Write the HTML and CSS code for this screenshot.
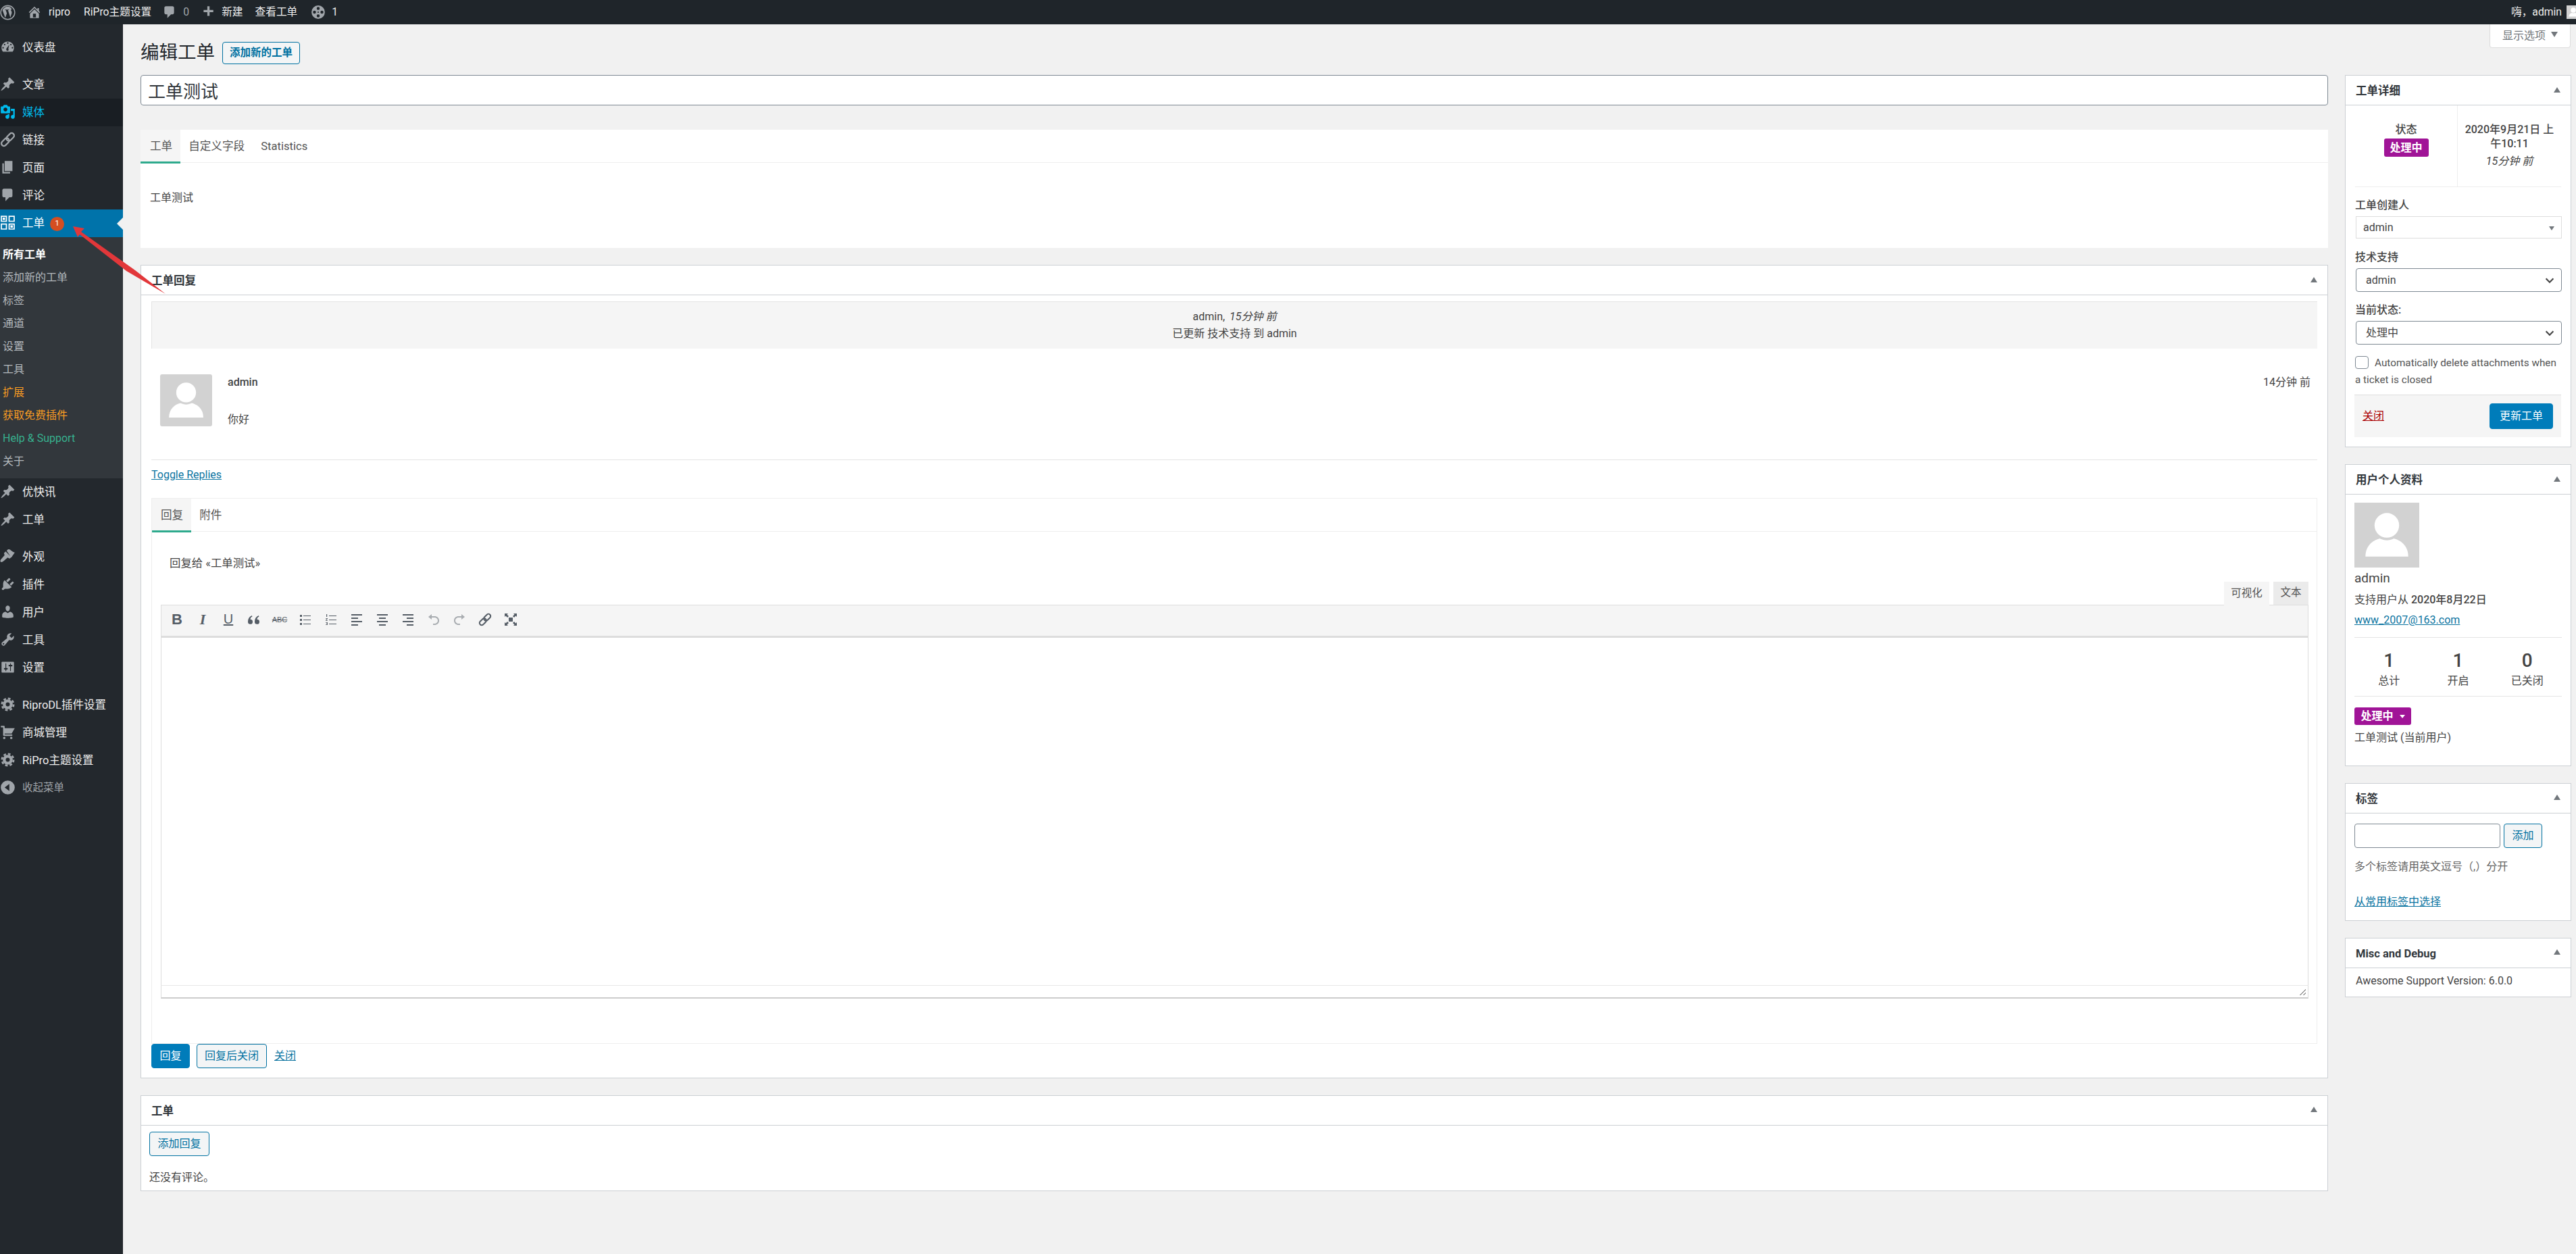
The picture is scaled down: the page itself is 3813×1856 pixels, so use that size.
FILE: index.html
```html
<!DOCTYPE html>
<html lang="zh-CN">
<head>
    <meta charset="UTF-8">
    <title>编辑工单</title>
    <link rel="stylesheet" href="styles.css">
</head>
<body>
    <!-- icon set -->
    <svg class="icon-defs" xmlns="http://www.w3.org/2000/svg">
        <symbol id="i-wp" viewBox="0 0 20 20"><circle cx="10" cy="10" r="9" fill="none" stroke="currentColor" stroke-width="1.300"/><path d="M3.200 7l3.600 10 2-6-1.300-4h-1V6.200h5V7h-1.200l3 9.500 1.700-5.500c.5-1.800-.3-2.700-.8-3.600-.4-.8.100-1.700 1-1.600C13.800 3.200 12 2.400 10 2.400 7 2.400 4.500 4.200 3.200 7z"/></symbol>
        <symbol id="i-home" viewBox="0 0 20 20"><path d="M16 8.500l1.530 1.530-1.060 1.060L10 4.620l-6.470 6.470-1.060-1.060L10 2.500l4 4v-2h2v4zm-6-2.460l6 5.990V18H4v-5.970zM12 17v-5H8v5h4z"/></symbol>
        <symbol id="i-comment" viewBox="0 0 20 20"><path d="M5 2h9c1.100 0 2 .9 2 2v7c0 1.100-.9 2-2 2h-2l-5 5v-5H5c-1.100 0-2-.9-2-2V4c0-1.100.9-2 2-2z"/></symbol>
        <symbol id="i-plus" viewBox="0 0 20 20"><path d="M17 7v3h-5v5H9v-5H4V7h5V2h3v5h5z"/></symbol>
        <symbol id="i-reel" viewBox="0 0 20 20"><path fill-rule="evenodd" d="M10 1a9 9 0 1 0 0 18 9 9 0 0 0 0-18zM10 3a2 2 0 1 1 0 4 2 2 0 0 1 0-4zM5 8a2 2 0 1 1 0 4 2 2 0 0 1 0-4zm10 0a2 2 0 1 1 0 4 2 2 0 0 1 0-4zm-5 5a2 2 0 1 1 0 4 2 2 0 0 1 0-4zm0-4a1 1 0 1 1 0 2 1 1 0 0 1 0-2z"/></symbol>
        <symbol id="i-dashboard" viewBox="0 0 20 20"><path fill-rule="evenodd" d="M3.760 16h12.480c1.100-1.370 1.760-3.110 1.760-5 0-4.420-3.580-8-8-8s-8 3.580-8 8c0 1.890.66 3.630 1.760 5zM10 4c.55 0 1 .45 1 1s-.45 1-1 1-1-.45-1-1 .45-1 1-1zM6 6c.55 0 1 .45 1 1s-.45 1-1 1-1-.45-1-1 .45-1 1-1zm8 0c.55 0 1 .45 1 1s-.45 1-1 1-1-.45-1-1 .45-1 1-1zm-5.370 5.550L12 7l-1.300 5.200c.8 1 .3 2.800-.7 2.800-1.100 0-2-.9-2-2 0-.57.24-1.080.63-1.450zM4 10c.55 0 1 .45 1 1s-.45 1-1 1-1-.45-1-1 .45-1 1-1zm12 0c.55 0 1 .45 1 1s-.45 1-1 1-1-.45-1-1 .45-1 1-1z"/></symbol>
        <symbol id="i-pin" viewBox="0 0 20 20"><path d="M10.440 3.020l1.820-1.820 6.360 6.350-1.830 1.820c-1.050-.68-2.480-.57-3.410.36l-.75.75c-.92.93-1.040 2.350-.35 3.410l-1.830 1.820-2.410-2.410-2.800 2.790c-.42.42-3.380 2.710-3.800 2.290s1.860-3.390 2.280-3.810l2.790-2.790L4.100 9.360l1.830-1.820c1.050.69 2.480.57 3.400-.36l.75-.75c.93-.92 1.050-2.350.36-3.410z"/></symbol>
        <symbol id="i-media" viewBox="0 0 20 20"><path fill-rule="evenodd" d="M13 11V4c0-.55-.45-1-1-1h-1.670L9 1H5L3.670 3H2c-.55 0-1 .45-1 1v7c0 .55.45 1 1 1h10c.55 0 1-.45 1-1zM7 4.500c1.380 0 2.500 1.120 2.500 2.500S8.380 9.500 7 9.500 4.500 8.380 4.500 7 5.620 4.500 7 4.500zM14 6h5v10.500c0 1.380-1.120 2.500-2.500 2.500S14 17.880 14 16.500s1.120-2.500 2.500-2.500c.17 0 .34.02.5.05V9h-3V6zm-4 8.050V13h2v3.500c0 1.380-1.120 2.500-2.500 2.500S7 17.880 7 16.500 8.120 14 9.500 14c.17 0 .34.02.5.05z"/></symbol>
        <symbol id="i-link" viewBox="0 0 20 20"><g fill="none" stroke="currentColor" stroke-width="2"><rect x="10" y="1" width="6.400" height="11.500" rx="3.200" transform="rotate(45 13.200 6.750)"/><rect x="3.600" y="7.500" width="6.400" height="11.500" rx="3.200" transform="rotate(45 6.800 13.250)"/></g></symbol>
        <symbol id="i-page" viewBox="0 0 20 20"><path d="M6 15V2h10v13H6zm-1 1h8v2H3V5h2v11z"/></symbol>
        <symbol id="i-ticket" viewBox="0 0 20 20"><path fill-rule="evenodd" d="M1 1h8v8H1zM2.500 2.500v5h5v-5zM11 1h8v8h-8zM12.500 2.500v5h5v-5zM1 11h8v8H1zM2.500 12.500v5h5v-5zM11 11h8v8h-8zM12.500 12.500v5h5v-5z"/><path d="M3.500 3.500h3v3h-3zM13.500 13.500h3v3h-3z"/></symbol>
        <symbol id="i-brush" viewBox="0 0 20 20"><path d="M8.500 2.500l1.500-1.300c1-.6 2.500-.3 3.500.5 1.500 1.300 2.500 2.200 5.500 3.300l-4.500 6.500zM7.300 3.700l7.300 7.300-2.300 1.800-2.500-1.200-5.800 5c-1 .8-2.600 1-3.200.3s-.4-2 .4-3l4.700-5.400-.8-2.800z"/></symbol>
        <symbol id="i-plugin" viewBox="0 0 20 20"><path d="M13.110 4.360L9.870 7.600 8 5.730l3.240-3.240c.35-.34 1.050-.2 1.560.32.52.51.66 1.210.31 1.550zm-8 1.770l.91-1.120 9.010 9.010-1.190.84c-.71.71-2.630 1.160-3.820 1.160H6.140L4.900 17.260c-.59.59-1.540.59-2.120 0-.59-.58-.59-1.530 0-2.120l1.240-1.240v-3.880c0-1.130.38-3.190 1.090-3.890zm7.260 3.970l3.240-3.240c.34-.35 1.040-.21 1.550.31.52.51.66 1.210.31 1.550l-3.240 3.250z"/></symbol>
        <symbol id="i-users" viewBox="0 0 20 20"><path d="M10 9.250c-2.270 0-2.730-3.440-2.730-3.440C7 4.020 7.820 2 9.970 2c2.160 0 2.980 2.020 2.710 3.810 0 0-.41 3.440-2.680 3.440zm0 2.570L12.720 10c2.390 0 4.520 2.330 4.520 4.530v2.490s-3.650 1.130-7.240 1.130c-3.650 0-7.240-1.130-7.240-1.130v-2.490c0-2.250 1.940-4.480 4.470-4.480z"/></symbol>
        <symbol id="i-tools" viewBox="0 0 20 20"><path fill-rule="evenodd" d="M16.680 9.770c-1.340 1.340-3.300 1.670-4.950.99l-5.410 6.520c-.99.99-2.590.99-3.580 0s-.99-2.590 0-3.570l6.520-5.420c-.68-1.650-.35-3.610.99-4.950 1.280-1.280 3.120-1.620 4.710-1.060l-2.890 2.890 2.820 2.820 2.860-2.870c.53 1.580.18 3.390-1.070 4.650zM3.810 16.210c.4.39 1.030.39 1.420 0 .4-.4.4-1.030 0-1.430-.39-.39-1.020-.39-1.420 0-.39.4-.39 1.030 0 1.430z"/></symbol>
        <symbol id="i-settings" viewBox="0 0 20 20"><path fill-rule="evenodd" d="M18 16V4c0-.55-.45-1-1-1H3c-.55 0-1 .45-1 1v12c0 .55.45 1 1 1h14c.55 0 1-.45 1-1zM8 11h1c.55 0 1 .45 1 1s-.45 1-1 1H8v1.500c0 .28-.22.5-.5.5s-.5-.22-.5-.5V13H6c-.55 0-1-.45-1-1s.45-1 1-1h1V5.500c0-.28.22-.5.5-.5s.5.22.5.5V11zm5-2h-1c-.55 0-1-.45-1-1s.45-1 1-1h1V5.500c0-.28.22-.5.5-.5s.5.22.5.5V7h1c.55 0 1 .45 1 1s-.45 1-1 1h-1v5.500c0 .28-.22.5-.5.5s-.5-.22-.5-.5V9z"/></symbol>
        <symbol id="i-gear" viewBox="0 0 20 20"><circle cx="10" cy="10" r="4.500" fill="none" stroke="currentColor" stroke-width="3.800"/><circle cx="10" cy="10" r="7.500" fill="none" stroke="currentColor" stroke-width="2.400" stroke-dasharray="3.300 2.590"/></symbol>
        <symbol id="i-cart" viewBox="0 0 20 20"><path d="M6 13h9c.55 0 1 .45 1 1s-.45 1-1 1H5c-.55 0-1-.45-1-1V4H2c-.55 0-1-.45-1-1s.45-1 1-1h3c.55 0 1 .45 1 1v2h13l-4 7H6v1zm-.5 3c.83 0 1.500.67 1.500 1.500S6.330 19 5.500 19 4 18.330 4 17.500 4.670 16 5.500 16zm9 0c.83 0 1.500.67 1.500 1.500s-.67 1.500-1.500 1.500-1.500-.67-1.500-1.500.67-1.500 1.500-1.500z"/></symbol>
        <symbol id="i-collapse" viewBox="0 0 20 20"><path fill-rule="evenodd" d="M10 1a9 9 0 1 0 0 18 9 9 0 0 0 0-18zm2 4.500v9L6 10z"/></symbol>
        <symbol id="i-avatar" viewBox="0 0 100 100"><path fill="#d2d2d2" d="M0 0h100v100H0z"/><path fill="#fff" d="M17 83c0-18 14-29 33-29s33 11 33 29z"/><circle cx="50" cy="35" r="23" fill="#d2d2d2"/><circle cx="50" cy="35" r="19" fill="#fff"/></symbol>
        <symbol id="i-quote" viewBox="0 0 20 20"><path d="M1 13a3.500 3.500 0 1 0 3.500-3.200c0-2 1-3.300 3-4.300L6.800 4C3 5.500 1 8.500 1 13zm10 0a3.500 3.500 0 1 0 3.500-3.200c0-2 1-3.300 3-4.300L16.800 4C13 5.500 11 8.500 11 13z"/></symbol>
        <symbol id="i-ul" viewBox="0 0 20 20"><path d="M2 3h3v3H2zM2 9h3v3H2zM2 15h3v3H2zM7 4h11v1H7zM7 10h11v1H7zM7 16h11v1H7z"/></symbol>
        <symbol id="i-ol" viewBox="0 0 20 20"><path d="M7 4h11v1H7zM7 10h11v1H7zM7 16h11v1H7zM3 2h1.200v4H3zM2 8h3v.8L3.200 11H5v.8H2V11l1.800-2.200H2zM2 14h3v4H2v-.8h2.200v-.8H3v-.8h1.200v-.8H2z"/></symbol>
        <symbol id="i-left" viewBox="0 0 20 20"><path d="M2 2h16v2H2zM2 7h10v2H2zM2 12h16v2H2zM2 17h10v2H2z"/></symbol>
        <symbol id="i-center" viewBox="0 0 20 20"><path d="M2 2h16v2H2zM5 7h10v2H5zM2 12h16v2H2zM5 17h10v2H5z"/></symbol>
        <symbol id="i-right" viewBox="0 0 20 20"><path d="M2 2h16v2H2zM8 7h10v2H8zM2 12h16v2H2zM8 17h10v2H8z"/></symbol>
        <symbol id="i-undo" viewBox="0 0 20 20"><path d="M2 6l5-4v3h4c4 0 7 2.500 7 6.500S15 18 11 18H9v-2h2c2.800 0 5-1.800 5-4.500S13.800 7 11 7H7v3z"/></symbol>
        <symbol id="i-redo" viewBox="0 0 20 20"><path d="M18 6l-5-4v3H9C5 5 2 7.500 2 11.500S5 18 9 18h2v-2H9c-2.800 0-5-1.800-5-4.500S6.200 7 9 7h4v3z"/></symbol>
        <symbol id="i-full" viewBox="0 0 20 20"><path d="M7 7h6v6H7zM1 1h5L4.500 2.600 7 5 5 7 2.600 4.500 1 6zM19 1v5l-1.600-1.500L15 7l-2-2 2.500-2.400L14 1zM1 19v-5l1.600 1.500L5 13l2 2-2.500 2.400L6 19zM19 19h-5l1.500-1.600L13 15l2-2 2.400 2.500L19 14z"/></symbol>
        <symbol id="i-chevron" viewBox="0 0 20 20"><path d="M4 7l6 6 6-6" fill="none" stroke="currentColor" stroke-width="2.400"/></symbol>
    </svg>

    <!-- top bar -->
    <header class="adminbar">
        <div class="bar-left">
            <svg class="bar-icon bar-wp"><use href="#i-wp"/></svg>
            <svg class="bar-icon bar-home"><use href="#i-home"/></svg>
            <a class="bar-item bar-site">ripro</a>
            <a class="bar-item bar-theme">RiPro主题设置</a>
            <svg class="bar-icon bar-comment"><use href="#i-comment"/></svg>
            <span class="bar-item bar-muted">0</span>
            <svg class="bar-icon bar-plus"><use href="#i-plus"/></svg>
            <a class="bar-item bar-new">新建</a>
            <a class="bar-item bar-view">查看工单</a>
            <svg class="bar-icon bar-reel"><use href="#i-reel"/></svg>
            <span class="bar-item bar-count">1</span>
        </div>
        <div class="bar-right">
            <span>嗨，admin</span>
            <svg class="bar-avatar"><use href="#i-avatar"/></svg>
        </div>
    </header>

    <div class="layout">
        <nav class="sidemenu">
            <a class="menu-item menu-first"><svg><use href="#i-dashboard"/></svg>仪表盘</a>
            <a class="menu-item menu-sep"><svg><use href="#i-pin"/></svg>文章</a>
            <a class="menu-item menu-hover"><svg><use href="#i-media"/></svg>媒体</a>
            <a class="menu-item"><svg><use href="#i-link"/></svg>链接</a>
            <a class="menu-item"><svg><use href="#i-page"/></svg>页面</a>
            <a class="menu-item"><svg><use href="#i-comment"/></svg>评论</a>
            <a class="menu-item menu-current"><svg><use href="#i-ticket"/></svg>工单<span class="menu-badge">1</span></a>
            <div class="submenu">
                <a class="sub-current">所有工单</a>
                <a>添加新的工单</a>
                <a>标签</a>
                <a>通道</a>
                <a>设置</a>
                <a>工具</a>
                <a class="sub-orange">扩展</a>
                <a class="sub-orange">获取免费插件</a>
                <a class="sub-green">Help &amp; Support</a>
                <a>关于</a>
            </div>
            <a class="menu-item"><svg><use href="#i-pin"/></svg>优快讯</a>
            <a class="menu-item"><svg><use href="#i-pin"/></svg>工单</a>
            <a class="menu-item menu-sep"><svg><use href="#i-brush"/></svg>外观</a>
            <a class="menu-item"><svg><use href="#i-plugin"/></svg>插件</a>
            <a class="menu-item"><svg><use href="#i-users"/></svg>用户</a>
            <a class="menu-item"><svg><use href="#i-tools"/></svg>工具</a>
            <a class="menu-item"><svg><use href="#i-settings"/></svg>设置</a>
            <a class="menu-item menu-sep"><svg><use href="#i-gear"/></svg>RiproDL插件设置</a>
            <a class="menu-item"><svg><use href="#i-cart"/></svg>商城管理</a>
            <a class="menu-item"><svg><use href="#i-gear"/></svg>RiPro主题设置</a>
            <a class="menu-item menu-collapse"><svg><use href="#i-collapse"/></svg>收起菜单</a>
        </nav>

        <main class="content">
            <a class="screen-options">显示选项<span class="caret-down"></span></a>

            <div class="page-head">
                <h1>编辑工单</h1>
                <a class="btn btn-head">添加新的工单</a>
            </div>

            <div class="columns">
                <div class="col-main">
                    <input class="title-input" type="text" value="工单测试">

                    <section class="box box-ticket">
                        <div class="tabs">
                            <a class="tab tab-active">工单</a>
                            <a class="tab">自定义字段</a>
                            <a class="tab">Statistics</a>
                        </div>
                        <p class="ticket-text">工单测试</p>
                    </section>

                    <section class="box">
                        <div class="box-head">
                            <h2>工单回复</h2>
                            <span class="caret-up"></span>
                        </div>
                        <div class="replies">
                            <div class="event">
                                <p>admin, <em>15分钟 前</em></p>
                                <p>已更新 技术支持 到 admin</p>
                            </div>
                            <div class="reply-row">
                                <svg class="reply-avatar"><use href="#i-avatar"/></svg>
                                <div class="reply-body">
                                    <div class="reply-meta">
                                        <strong>admin</strong>
                                        <span>14分钟 前</span>
                                    </div>
                                    <p>你好</p>
                                </div>
                            </div>
                            <a class="toggle-link">Toggle Replies</a>

                            <div class="reply-panel">
                                <div class="tabs tabs-reply">
                                    <a class="tab tab-active">回复</a>
                                    <a class="tab">附件</a>
                                </div>
                                <p class="reply-to">回复给 «工单测试»</p>
                                <div class="editor">
                                    <div class="editor-tabs">
                                        <a class="editor-tab editor-tab-on">可视化</a>
                                        <a class="editor-tab">文本</a>
                                    </div>
                                    <div class="toolbar">
                                        <span class="tool tool-b">B</span>
                                        <span class="tool tool-i">I</span>
                                        <span class="tool tool-u">U</span>
                                        <span class="tool"><svg><use href="#i-quote"/></svg></span>
                                        <span class="tool tool-abc">ABC</span>
                                        <span class="tool"><svg><use href="#i-ul"/></svg></span>
                                        <span class="tool"><svg><use href="#i-ol"/></svg></span>
                                        <span class="tool"><svg><use href="#i-left"/></svg></span>
                                        <span class="tool"><svg><use href="#i-center"/></svg></span>
                                        <span class="tool"><svg><use href="#i-right"/></svg></span>
                                        <span class="tool tool-off"><svg><use href="#i-undo"/></svg></span>
                                        <span class="tool tool-off"><svg><use href="#i-redo"/></svg></span>
                                        <span class="tool"><svg><use href="#i-link"/></svg></span>
                                        <span class="tool"><svg><use href="#i-full"/></svg></span>
                                    </div>
                                    <div class="editor-area"></div>
                                    <div class="editor-status"><span class="resize-grip"></span></div>
                                </div>
                            </div>

                            <div class="reply-actions">
                                <a class="btn btn-primary btn-reply">回复</a>
                                <a class="btn btn-close-reply">回复后关闭</a>
                                <a class="link">关闭</a>
                            </div>
                        </div>
                    </section>

                    <section class="box">
                        <div class="box-head">
                            <h2>工单</h2>
                            <span class="caret-up"></span>
                        </div>
                        <div class="notes">
                            <a class="btn btn-note">添加回复</a>
                            <p>还没有评论。</p>
                        </div>
                    </section>
                </div>

                <aside class="col-side">
                    <section class="box">
                        <div class="box-head">
                            <h2>工单详细</h2>
                            <span class="caret-up"></span>
                        </div>
                        <div class="detail-top">
                            <div class="detail-status">
                                <b>状态</b>
                                <span class="badge">处理中</span>
                            </div>
                            <div class="detail-date">
                                <b>2020年9月21日 上午10:11</b>
                                <em>15分钟 前</em>
                            </div>
                        </div>
                        <div class="detail-form">
                            <label>工单创建人</label>
                            <div class="select select-light">admin<span class="caret-down caret-small"></span></div>
                            <label>技术支持</label>
                            <div class="select">admin<svg><use href="#i-chevron"/></svg></div>
                            <label>当前状态:</label>
                            <div class="select">处理中<svg><use href="#i-chevron"/></svg></div>
                            <p class="auto-delete"><span class="checkbox"></span>Automatically delete attachments when a ticket is closed</p>
                        </div>
                        <div class="detail-actions">
                            <a class="link-danger">关闭</a>
                            <a class="btn btn-primary btn-update">更新工单</a>
                        </div>
                    </section>

                    <section class="box">
                        <div class="box-head">
                            <h2>用户个人资料</h2>
                            <span class="caret-up"></span>
                        </div>
                        <div class="profile">
                            <svg class="profile-avatar"><use href="#i-avatar"/></svg>
                            <div class="profile-name">admin</div>
                            <p class="profile-since">支持用户从 <b>2020年8月22日</b></p>
                            <a class="link profile-mail">www_2007@163.com</a>
                            <div class="stats">
                                <div><strong>1</strong><span>总计</span></div>
                                <div><strong>1</strong><span>开启</span></div>
                                <div><strong>0</strong><span>已关闭</span></div>
                            </div>
                            <span class="badge badge-menu">处理中<span class="caret-white"></span></span>
                            <p class="profile-ticket">工单测试 (当前用户)</p>
                        </div>
                    </section>

                    <section class="box">
                        <div class="box-head">
                            <h2>标签</h2>
                            <span class="caret-up"></span>
                        </div>
                        <div class="tagbox">
                            <div class="tag-row">
                                <input class="tag-input" type="text">
                                <a class="btn btn-tag">添加</a>
                            </div>
                            <p class="tag-help">多个标签请用英文逗号（,）分开</p>
                            <a class="link">从常用标签中选择</a>
                        </div>
                    </section>

                    <section class="box">
                        <div class="box-head">
                            <h2>Misc and Debug</h2>
                            <span class="caret-up"></span>
                        </div>
                        <p class="debug">Awesome Support Version: 6.0.0</p>
                    </section>
                </aside>
            </div>
        </main>
    </div>

    <!-- annotation arrow -->
    <svg class="arrow" viewBox="100 330 150 110">
        <polygon points="108,335 125,338 120,343 200,400 245,435 187,401 118,347 115,351" fill="#e2373a"/>
    </svg>
</body>
</html>
```

FILE: styles.css
```css
* {
    box-sizing: border-box;
}
html, body {
    margin: 0;
    height: 100%;
}
body {
    position: relative;
    font-family: Roboto, "Noto Sans CJK SC", sans-serif;
    font-size: 16px;
    line-height: 1.4;
    color: #444;
    background-color: #f1f1f1;
    overflow: hidden;
}
p, h1, h2 {
    margin: 0;
}
.icon-defs {
    display: none;
}

/* top bar */
.adminbar {
    display: flex;
    justify-content: space-between;
    align-items: center;
    height: 36px;
    background-color: #1f252a;
    color: #eee;
    font-size: 15.7px;
}
.bar-left, .bar-right {
    display: flex;
    align-items: center;
}
.bar-icon {
    width: 22px;
    height: 22px;
    fill: #a0a5aa;
    color: #a0a5aa;
    flex: none;
}
.bar-wp { width: 23px; height: 23px; }
.bar-home { margin-left: 17px; }
.bar-site { margin-left: 10px; }
.bar-theme { margin-left: 20px; }
.bar-comment { margin-left: 16px; }
.bar-muted { margin-left: 9px; color: #a0a5aa; }
.bar-plus { margin-left: 17px; }
.bar-new { margin-left: 9px; }
.bar-view { margin-left: 18px; }
.bar-reel { margin-left: 20px; }
.bar-count { margin-left: 9px; }
.bar-right {
    gap: 7px;
}
.bar-avatar {
    width: 20px;
    height: 20px;
    margin-right: -6px;
}

/* side menu */
.layout {
    display: flex;
    height: calc(100% - 36px);
}
.sidemenu {
    flex: none;
    width: 182px;
    padding-top: 14px;
    background-color: #23282d;
}
.menu-item {
    display: flex;
    align-items: center;
    height: 41px;
    padding-top: 1px;
    color: #eee;
    font-size: 16.5px;
}
.menu-item svg {
    flex: none;
    width: 23px;
    height: 23px;
    margin: -4px 10px 0 0;
    fill: #a0a5aa;
    color: #a0a5aa;
}
.menu-sep {
    margin-top: 14px;
}
.menu-hover {
    background-color: #191e23;
    color: #00b9eb;
}
.menu-hover svg {
    fill: #00b9eb;
    color: #00b9eb;
}
.menu-current {
    position: relative;
    background-color: #0073aa;
    color: #fff;
}
.menu-current svg {
    fill: #fff;
    color: #fff;
}
.menu-current::after {
    content: "";
    position: absolute;
    right: 0;
    top: 12px;
    border: 9px solid transparent;
    border-right-color: #f1f1f1;
    border-left: 0;
}
.menu-badge {
    display: flex;
    justify-content: center;
    align-items: center;
    width: 21px;
    height: 21px;
    margin-left: 8px;
    border-radius: 50%;
    background-color: #d54e21;
    color: #fff;
    font-size: 11px;
}
.menu-collapse {
    color: #a0a5aa;
    font-size: 15.5px;
}
.submenu {
    padding: 9px 0 8px;
    background-color: #32373c;
}
.submenu a {
    display: flex;
    align-items: center;
    height: 34px;
    padding-left: 4px;
    color: #b4b9be;
}
.submenu .sub-current {
    color: #fff;
    font-weight: 700;
}
.submenu .sub-orange {
    color: #f89c23;
}
.submenu .sub-green {
    color: #37b08e;
}

/* page area */
.content {
    position: relative;
    flex: 1;
    min-width: 0;
    padding: 25px 7px 0 26px;
}
.screen-options {
    position: absolute;
    top: 0;
    right: 8px;
    display: flex;
    justify-content: center;
    align-items: center;
    gap: 8px;
    width: 120px;
    height: 35px;
    background-color: #fff;
    border: 1px solid #ddd;
    border-top: 0;
    border-radius: 0 0 4px 4px;
    color: #72777c;
}
.caret-down {
    width: 0;
    height: 0;
    margin-bottom: 4px;
    border: 5px solid transparent;
    border-top: 8px solid #72777c;
    border-bottom: 0;
}
.caret-up {
    width: 0;
    height: 0;
    border: 5px solid transparent;
    border-bottom: 8px solid #72777c;
    border-top: 0;
}
.page-head {
    display: flex;
    align-items: center;
    gap: 11px;
    height: 35px;
    margin-bottom: 15px;
}
.page-head h1 {
    font-size: 27.5px;
    font-weight: 400;
    color: #23282d;
}
.btn {
    display: inline-flex;
    justify-content: center;
    align-items: center;
    height: 36px;
    border: 1px solid #0071a1;
    border-radius: 4px;
    background-color: #f3f5f6;
    color: #0071a1;
}
.btn-head {
    width: 115px;
    height: 33px;
    font-weight: 700;
    font-size: 15.5px;
}
.btn-primary {
    background-color: #007cba;
    border-color: #007cba;
    color: #fff;
}
.columns {
    display: grid;
    grid-template-columns: 1fr 335px;
    gap: 25px;
}
.title-input {
    display: block;
    width: 100%;
    height: 45px;
    padding: 0 10px;
    margin-bottom: 36px;
    border: 1px solid #7e8993;
    border-radius: 4px;
    font: 26px Roboto, "Noto Sans CJK SC", sans-serif;
    color: #32373c;
    background-color: #fff;
}

/* boxes */
.box {
    margin-bottom: 25px;
    background-color: #fff;
    border: 1px solid #ccd0d4;
}
.box-ticket {
    height: 175px;
    border: 0;
}
.box-head {
    display: flex;
    justify-content: space-between;
    align-items: center;
    height: 44px;
    padding: 2px 15px 0;
    border-bottom: 1px solid #ccd0d4;
}
.box-head h2 {
    font-size: 16.5px;
    font-weight: 700;
    color: #32373c;
}
.box-head .caret-up {
    margin-top: -4px;
}
.tabs {
    display: flex;
    height: 49px;
    border-bottom: 1px solid #eee;
    font-size: 16.6px;
}
.tab {
    display: flex;
    align-items: center;
    padding: 2px 12px 0;
    color: #555;
}
.tab-active {
    background-color: #f5f5f5;
    border-bottom: 3px solid #2eaa8d;
    height: 50px;
    padding: 2px 12px 0 14px;
}
.tabs-reply .tab-active {
    padding: 2px 12px 0 13px;
}
.ticket-text {
    padding: 41px 14px 0;
}

/* replies */
.replies {
    padding: 9px 15px 14px;
}
.event {
    height: 70px;
    padding-top: 9px;
    background-color: #f5f5f5;
    border: 1px solid #e5e5e5;
    border-width: 1px 0 0 1px;
    text-align: center;
    line-height: 25px;
}
.event em {
    margin-left: 3px;
}
.reply-row {
    display: flex;
    gap: 23px;
    padding: 39px 10px 47px 13px;
    border-bottom: 1px solid #e5e5e5;
}
.reply-avatar {
    flex: none;
    width: 77px;
    height: 77px;
    margin-top: -1px;
    border-radius: 3px;
}
.reply-body {
    flex: 1;
}
.reply-meta {
    display: flex;
    justify-content: space-between;
    margin-bottom: 33px;
}
.reply-meta strong {
    font-weight: 500;
}
.toggle-link, .link {
    color: #0a739f;
    text-decoration: underline;
}
.toggle-link {
    display: block;
    padding-top: 11px;
    height: 56px;
}
.reply-panel {
    height: 808px;
    border: 1px solid #eee;
}
.reply-to {
    padding: 36px 0 0 26px;
    font-size: 16.4px;
}
.editor {
    margin: 15px 12px 0 13px;
}
.editor-tabs {
    display: flex;
    justify-content: flex-end;
    gap: 6px;
    height: 34px;
}
.editor-tab {
    display: flex;
    justify-content: center;
    align-items: center;
    width: 52px;
    background-color: #ebebeb;
    color: #555;
    font-size: 15.5px;
}
.editor-tab-on {
    position: relative;
    width: 67px;
    height: 36px;
    background-color: #f5f5f5;
}
.toolbar {
    display: flex;
    align-items: center;
    height: 49px;
    padding-left: 4px;
    background-color: #f5f5f5;
    border: 1px solid #ddd;
    border-width: 1px 1px 3px 1px;
}
.tool {
    display: flex;
    justify-content: center;
    align-items: center;
    width: 38px;
    height: 38px;
    margin-top: -3px;
    color: #555d66;
}
.tool svg {
    width: 20px;
    height: 20px;
    fill: #555d66;
    color: #555d66;
}
.tool-off svg {
    fill: #a9adb1;
}
.tool-b {
    font: 700 22px "Liberation Sans", sans-serif;
}
.tool-i {
    font: italic 700 22px "Liberation Serif", serif;
}
.tool-u {
    font: 400 20px "Liberation Sans", sans-serif;
    text-decoration: underline;
}
.tool-abc {
    font: 400 11px "Liberation Sans", sans-serif;
    text-decoration: line-through;
}
.editor-area {
    height: 514px;
    background-color: #fff;
    border-left: 1px solid #ddd;
    border-right: 1px solid #ddd;
}
.editor-status {
    display: flex;
    justify-content: flex-end;
    align-items: flex-end;
    height: 20px;
    border: 1px solid #ddd;
    border-top: 1px solid #e8e8e8;
    border-bottom: 2px solid #ccc;
}
.resize-grip {
    width: 10px;
    height: 10px;
    margin: 0 3px 3px 0;
    background: linear-gradient(135deg, transparent 50%, #999 50%, #999 60%, transparent 60%, transparent 75%, #999 75%, #999 85%, transparent 85%);
}
.reply-actions {
    display: flex;
    align-items: center;
}
.btn-reply {
    width: 57px;
}
.btn-close-reply {
    width: 104px;
    margin-left: 10px;
}
.reply-actions .link {
    margin-left: 11px;
}
.notes {
    padding: 9px 12px 8px;
}
.notes p {
    margin-top: 21px;
}
.btn-note {
    width: 89px;
}

/* side column */
.detail-top {
    display: flex;
    height: 121px;
    margin: 0 14px;
    border-bottom: 1px solid #eee;
    text-align: center;
}
.detail-status {
    display: flex;
    flex-direction: column;
    align-items: center;
    flex: none;
    width: 152px;
    padding-top: 25px;
    border-right: 1px solid #eee;
}
.detail-status b, .detail-date b {
    font-weight: 500;
}
.badge {
    display: inline-flex;
    justify-content: center;
    align-items: center;
    width: 66px;
    height: 27px;
    margin-top: 2px;
    border-radius: 3px;
    background-color: #a01497;
    color: #fff;
    font-weight: 700;
}
.detail-date {
    flex: 1;
    padding: 25px 8px 0;
}
.detail-date b {
    display: block;
    line-height: 21px;
}
.detail-date em {
    display: block;
    margin-top: 5px;
}
.detail-form {
    padding: 14px 13px 0 14px;
}
.detail-form label {
    display: block;
    font-weight: 500;
    line-height: 26px;
}
.select {
    display: flex;
    justify-content: space-between;
    align-items: center;
    height: 35px;
    margin: 3px 0 14px 1px;
    padding: 1px 8px 0 14px;
    border: 1px solid #7e8993;
    border-radius: 4px;
    background-color: #fff;
}
.select svg {
    width: 18px;
    height: 18px;
    color: #444;
}
.select-light {
    height: 33px;
    padding: 2px 10px 0;
    border-color: #ddd;
    border-radius: 0;
    margin-bottom: 15px;
}
.caret-small {
    margin: 0;
    border-width: 4px;
    border-top-width: 6px;
    border-bottom: 0;
}
.auto-delete {
    margin-top: 15px;
    font-size: 15.3px;
    line-height: 25px;
    color: #555;
}
.checkbox {
    display: inline-block;
    width: 20px;
    height: 19px;
    margin-right: 9px;
    vertical-align: -4px;
    border: 1px solid #7e8993;
    border-radius: 4px;
}
.detail-actions {
    display: flex;
    justify-content: space-between;
    align-items: center;
    height: 63px;
    margin: 9px 14px 14px 13px;
    padding: 0 12px;
    background-color: #f5f5f5;
    border-top: 1px solid #ddd;
}
.link-danger {
    color: #a00;
    text-decoration: underline;
}
.btn-update {
    width: 94px;
    height: 38px;
}
.profile {
    padding: 12px 13px 29px;
}
.profile-avatar {
    display: block;
    width: 96px;
    height: 96px;
}
.profile-name {
    font-size: 19px;
    margin-top: 3px;
}
.profile-since {
    margin-top: 7px;
}
.profile-since b {
    font-weight: 500;
}
.profile-mail {
    display: block;
    margin-top: 8px;
}
.stats {
    display: grid;
    grid-template-columns: repeat(3, 1fr);
    margin: 14px 0 16px;
    padding: 16px 0 10px;
    border: 1px solid #e5e5e5;
    border-width: 1px 0;
    text-align: center;
}
.stats strong {
    display: block;
    font-size: 28px;
    font-weight: 500;
    line-height: 36px;
}
.stats span {
    display: block;
    line-height: 24px;
}
.badge-menu {
    display: flex;
    gap: 9px;
    width: 84px;
    height: 26px;
    margin: 0;
}
.caret-white {
    width: 0;
    height: 0;
    border: 4px solid transparent;
    border-top: 5px solid #fff;
    border-bottom: 0;
}
.profile-ticket {
    margin-top: 8px;
}
.tagbox {
    padding: 15px 13px 15px;
}
.tag-row {
    display: flex;
    gap: 5px;
}
.tag-input {
    width: 216px;
    height: 36px;
    border: 1px solid #7e8993;
    border-radius: 4px;
    background-color: #fff;
}
.btn-tag {
    width: 57px;
}
.tag-help {
    margin: 17px 0 30px;
    color: #666;
}
.debug {
    padding: 8px 15px 12px;
}

/* annotation */
.arrow {
    position: absolute;
    left: 100px;
    top: 330px;
    width: 150px;
    height: 110px;
    pointer-events: none;
}
```
